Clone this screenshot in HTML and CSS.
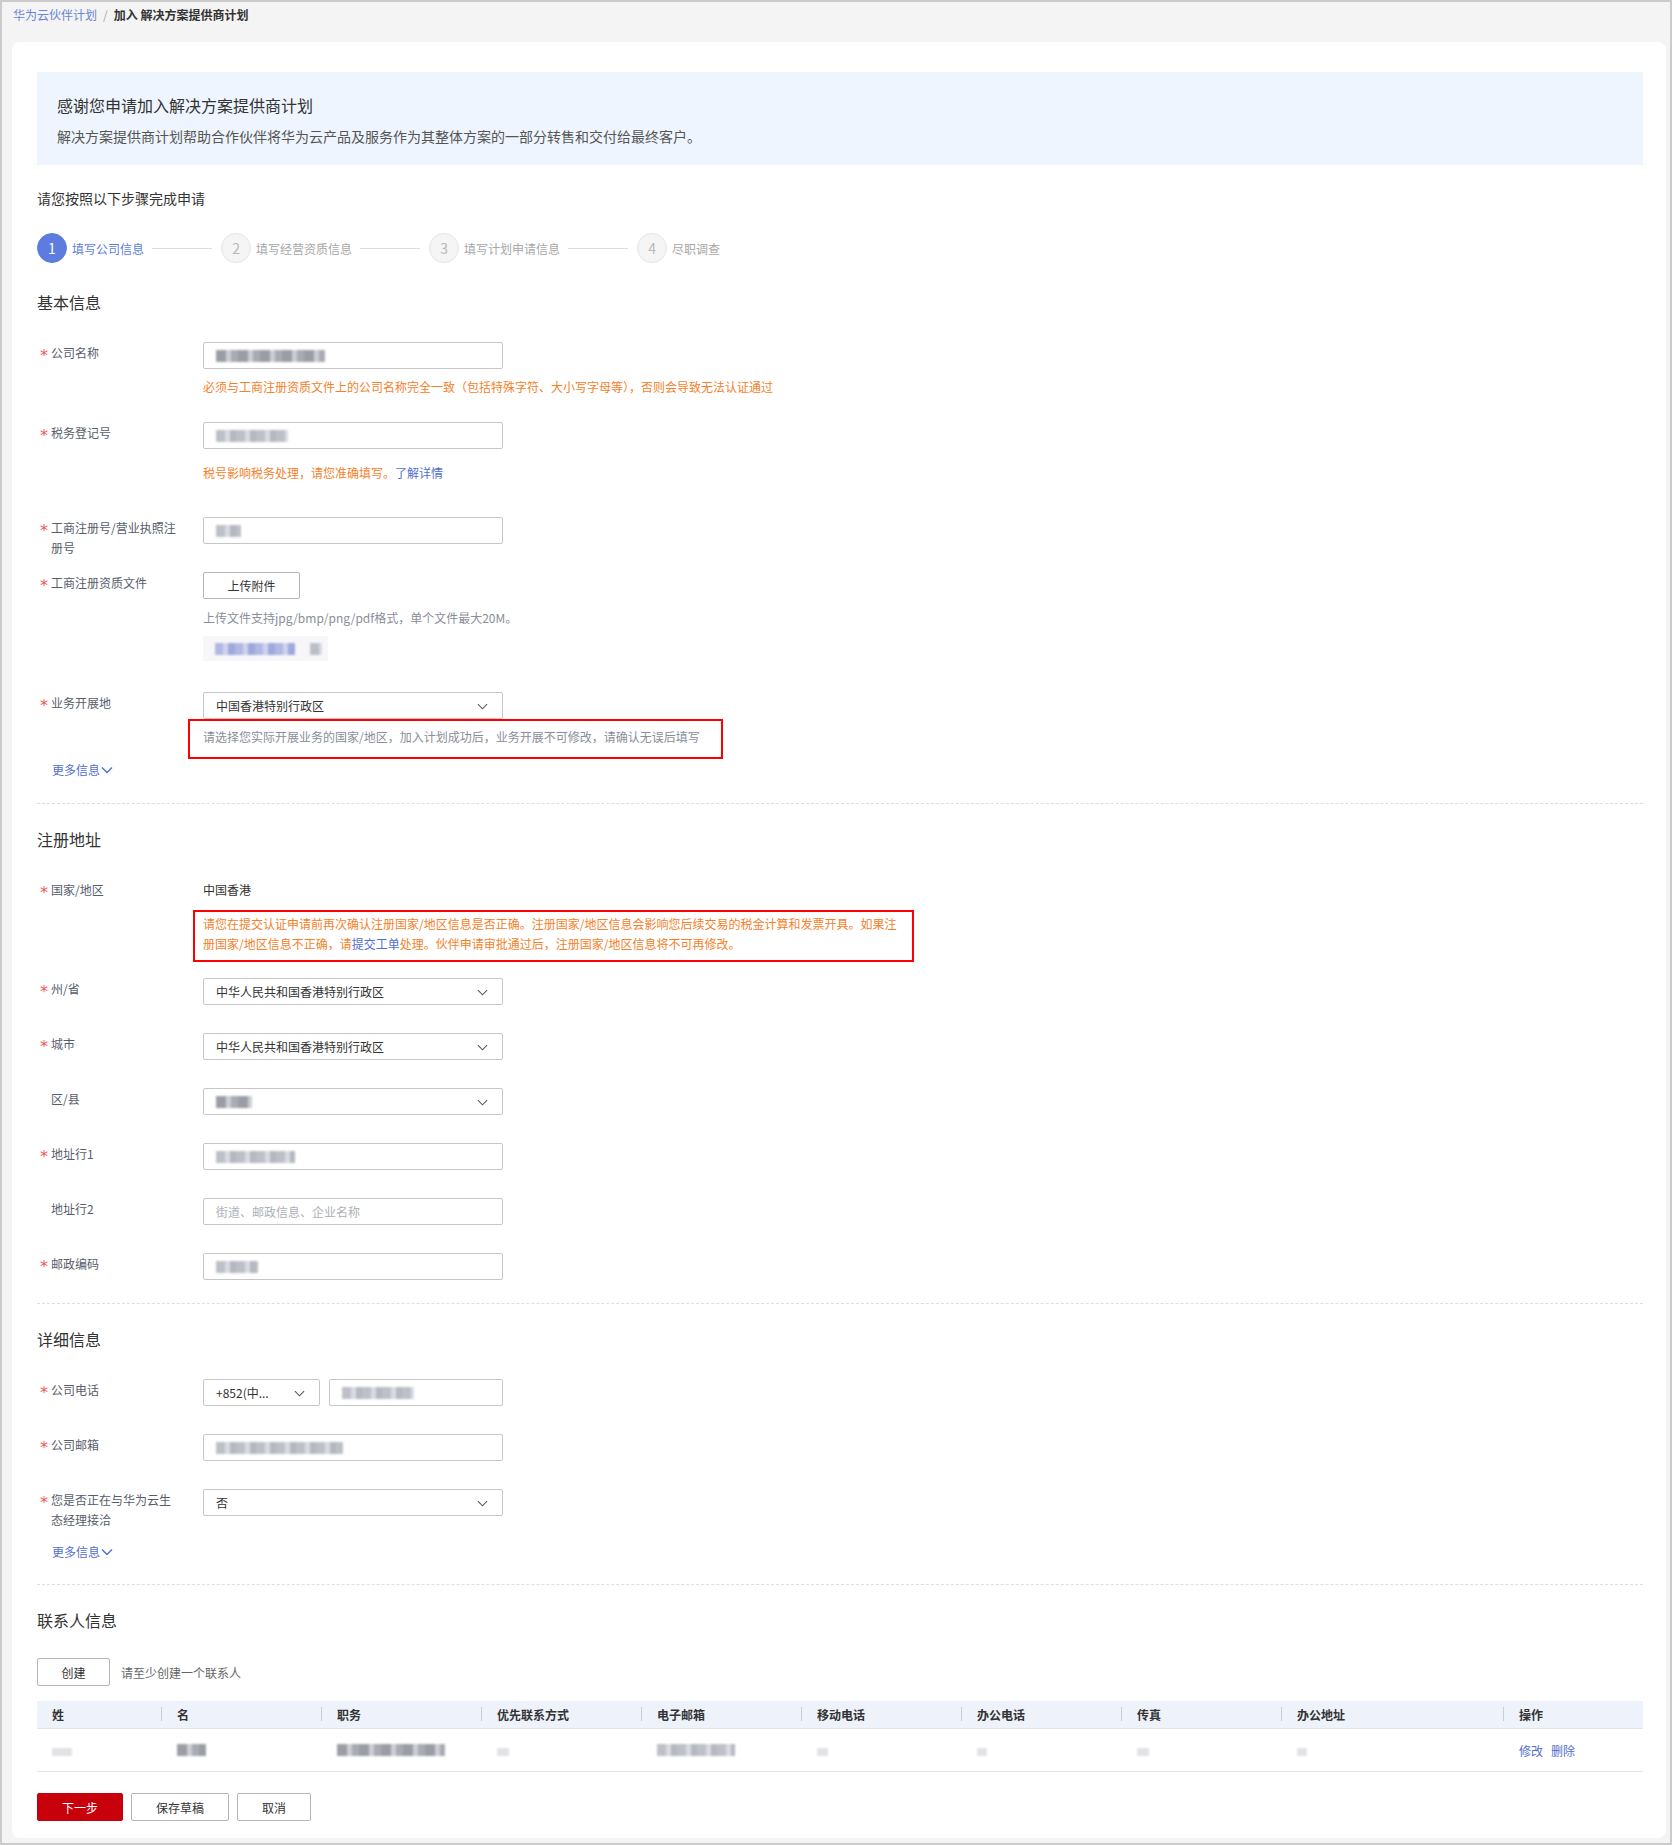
FILE: index.html
```html
<!DOCTYPE html>
<html lang="zh-CN">
<head>
<meta charset="UTF-8">
<title>加入 解决方案提供商计划</title>
<link rel="stylesheet" href="styles.css">
</head>
<body>
<div class="frame">
    <div class="crumb">
        <a class="crumb-link">华为云伙伴计划</a><span class="crumb-sep">/</span><span class="crumb-cur">加入 解决方案提供商计划</span>
    </div>

    <div class="card">
        <div class="notice">
            <div class="notice-title">感谢您申请加入解决方案提供商计划</div>
            <div class="notice-desc">解决方案提供商计划帮助合作伙伴将华为云产品及服务作为其整体方案的一部分转售和交付给最终客户。</div>
        </div>

        <div class="lead">请您按照以下步骤完成申请</div>

        <div class="steps">
            <span class="step-dot active">1</span><span class="step-text active">填写公司信息</span><span class="step-line"></span>
            <span class="step-dot">2</span><span class="step-text">填写经营资质信息</span><span class="step-line"></span>
            <span class="step-dot">3</span><span class="step-text">填写计划申请信息</span><span class="step-line"></span>
            <span class="step-dot">4</span><span class="step-text">尽职调查</span>
        </div>

        <!-- 基本信息 -->
        <h3 class="section-title first">基本信息</h3>

        <div class="item gap-26">
            <div class="label"><span class="star">*</span><span class="label-text">公司名称</span></div>
            <div class="control">
                <div class="input"><span class="blur dark w109"></span></div>
                <div class="hint warn">必须与工商注册资质文件上的公司名称完全一致（包括特殊字符、大小写字母等），否则会导致无法认证通过</div>
            </div>
        </div>

        <div class="item gap-35">
            <div class="label"><span class="star">*</span><span class="label-text">税务登记号</span></div>
            <div class="control">
                <div class="input"><span class="blur w72"></span></div>
                <div class="hint warn tax">税号影响税务处理，请您准确填写。<a class="link">了解详情</a></div>
            </div>
        </div>

        <div class="item gap-14">
            <div class="label"><span class="star">*</span><span class="label-text">工商注册号/营业执照注册号</span></div>
            <div class="control">
                <div class="input"><span class="blur w25"></span></div>
            </div>
        </div>

        <div class="item gap-31">
            <div class="label"><span class="star">*</span><span class="label-text">工商注册资质文件</span></div>
            <div class="control">
                <button class="btn upload">上传附件</button>
                <div class="hint muted upload-hint">上传文件支持jpg/bmp/png/pdf格式，单个文件最大20M。</div>
                <div class="file-chip"><span class="blur blue w80"></span><span class="blur w12"></span></div>
            </div>
        </div>

        <div class="item gap-0">
            <div class="label"><span class="star">*</span><span class="label-text">业务开展地</span></div>
            <div class="control">
                <div class="input select">中国香港特别行政区<svg class="chev" viewBox="0 0 12 7"><polyline points="1,1 6,6 11,1"/></svg></div>
                <div class="mark mark-area">请选择您实际开展业务的国家/地区，加入计划成功后，业务开展不可修改，请确认无误后填写</div>
            </div>
        </div>

        <a class="more more-1">更多信息<svg viewBox="0 0 12 8"><polyline points="1,1.5 6,6.5 11,1.5"/></svg></a>

        <div class="divider div-1"></div>

        <!-- 注册地址 -->
        <h3 class="section-title">注册地址</h3>

        <div class="item gap-16 country">
            <div class="label"><span class="star">*</span><span class="label-text">国家/地区</span></div>
            <div class="control">
                <div class="value">中国香港</div>
                <div class="mark mark-country">请您在提交认证申请前再次确认注册国家/地区信息是否正确。注册国家/地区信息会影响您后续交易的税金计算和发票开具。如果注册国家/地区信息不正确，请<a class="link">提交工单</a>处理。伙伴申请审批通过后，注册国家/地区信息将不可再修改。</div>
            </div>
        </div>

        <div class="item">
            <div class="label"><span class="star">*</span><span class="label-text">州/省</span></div>
            <div class="control">
                <div class="input select">中华人民共和国香港特别行政区<svg class="chev" viewBox="0 0 12 7"><polyline points="1,1 6,6 11,1"/></svg></div>
            </div>
        </div>

        <div class="item">
            <div class="label"><span class="star">*</span><span class="label-text">城市</span></div>
            <div class="control">
                <div class="input select">中华人民共和国香港特别行政区<svg class="chev" viewBox="0 0 12 7"><polyline points="1,1 6,6 11,1"/></svg></div>
            </div>
        </div>

        <div class="item">
            <div class="label"><span class="star hidden">*</span><span class="label-text">区/县</span></div>
            <div class="control">
                <div class="input select"><span class="blur dark w36"></span><svg class="chev" viewBox="0 0 12 7"><polyline points="1,1 6,6 11,1"/></svg></div>
            </div>
        </div>

        <div class="item">
            <div class="label"><span class="star">*</span><span class="label-text">地址行1</span></div>
            <div class="control">
                <div class="input"><span class="blur w79"></span></div>
            </div>
        </div>

        <div class="item">
            <div class="label"><span class="star hidden">*</span><span class="label-text">地址行2</span></div>
            <div class="control">
                <div class="input placeholder">街道、邮政信息、企业名称</div>
            </div>
        </div>

        <div class="item gap-0">
            <div class="label"><span class="star">*</span><span class="label-text">邮政编码</span></div>
            <div class="control">
                <div class="input"><span class="blur w42"></span></div>
            </div>
        </div>

        <div class="divider div-2"></div>

        <!-- 详细信息 -->
        <h3 class="section-title">详细信息</h3>

        <div class="item">
            <div class="label"><span class="star">*</span><span class="label-text">公司电话</span></div>
            <div class="control phone">
                <div class="input select code">+852(中...<svg class="chev" viewBox="0 0 12 7"><polyline points="1,1 6,6 11,1"/></svg></div>
                <div class="input number"><span class="blur w72"></span></div>
            </div>
        </div>

        <div class="item">
            <div class="label"><span class="star">*</span><span class="label-text">公司邮箱</span></div>
            <div class="control">
                <div class="input"><span class="blur w127"></span></div>
            </div>
        </div>

        <div class="item gap-0">
            <div class="label"><span class="star">*</span><span class="label-text">您是否正在与华为云生态经理接洽</span></div>
            <div class="control">
                <div class="input select">否<svg class="chev" viewBox="0 0 12 7"><polyline points="1,1 6,6 11,1"/></svg></div>
            </div>
        </div>

        <a class="more more-2">更多信息<svg viewBox="0 0 12 8"><polyline points="1,1.5 6,6.5 11,1.5"/></svg></a>

        <div class="divider div-3"></div>

        <!-- 联系人信息 -->
        <h3 class="section-title">联系人信息</h3>

        <div class="create-row">
            <button class="btn create">创建</button>
            <span class="create-tip">请至少创建一个联系人</span>
        </div>

        <table class="contacts">
            <colgroup>
                <col class="c-xs"><col class="c-md"><col class="c-md"><col class="c-md"><col class="c-md">
                <col class="c-md"><col class="c-md"><col class="c-md"><col class="c-lg"><col class="c-sm">
            </colgroup>
            <thead>
                <tr>
                    <th>姓</th><th>名</th><th>职务</th><th>优先联系方式</th><th>电子邮箱</th>
                    <th>移动电话</th><th>办公电话</th><th>传真</th><th>办公地址</th><th>操作</th>
                </tr>
            </thead>
            <tbody>
                <tr>
                    <td><span class="blur faint w20"></span></td>
                    <td><span class="blur dark w29"></span></td>
                    <td><span class="blur dark w108"></span></td>
                    <td><span class="blur faint w12"></span></td>
                    <td><span class="blur w78"></span></td>
                    <td><span class="blur faint w11"></span></td>
                    <td><span class="blur faint w10"></span></td>
                    <td><span class="blur faint w12"></span></td>
                    <td><span class="blur faint w10"></span></td>
                    <td><a class="link op">修改</a><a class="link op">删除</a></td>
                </tr>
            </tbody>
        </table>

        <div class="actions">
            <button class="btn primary">下一步</button>
            <button class="btn draft">保存草稿</button>
            <button class="btn cancel">取消</button>
        </div>
    </div>
</div>
</body>
</html>
```

FILE: styles.css
```css
  body {
      margin: 0;
      font-family: "Noto Sans CJK SC", "Microsoft YaHei", sans-serif;
      font-size: 12px;
      color: #333;
  }
  .frame {
      width: 1672px;
      height: 1845px;
      box-sizing: border-box;
      border: 2px solid #cbcbcb;
      background: #f4f4f4;
      overflow: hidden;
  }
  .crumb {
      height: 20px;
      padding: 3px 11px 17px;
      line-height: 20px;
      font-size: 12px;
  }
  .crumb-link {
      color: #6a84d8;
  }
  .crumb-sep {
      color: #a8a8a8;
      margin: 0 6px;
  }
  .crumb-cur {
      color: #333;
      font-weight: bold;
  }
  .card {
      margin: 0 4px 0 10px;
      height: 1796px;
      box-sizing: border-box;
      background: #fff;
      border-radius: 8px;
      padding: 30px 23px 0 25px;
  }

  /* notice */
  .notice {
      height: 93px;
      box-sizing: border-box;
      background: #eef5fe;
      padding: 22px 20px 0;
  }
  .notice-title {
      font-size: 16px;
      line-height: 22px;
      color: #333;
  }
  .notice-desc {
      margin-top: 10px;
      font-size: 14px;
      line-height: 20px;
      color: #555;
  }
  .lead {
      margin-top: 23px;
      font-size: 14px;
      line-height: 20px;
      color: #333;
  }

  /* steps */
  .steps {
      margin-top: 25px;
      height: 30px;
      display: flex;
      align-items: center;
  }
  .step-dot {
      width: 30px;
      height: 30px;
      box-sizing: border-box;
      border-radius: 50%;
      border: 1px solid #e4e4e4;
      background: #f5f5f5;
      color: #b8b8b8;
      font-size: 14px;
      display: flex;
      align-items: center;
      justify-content: center;
  }
  .step-dot.active {
      background: #5e7ce0;
      border-color: #5e7ce0;
      color: #fff;
  }
  .step-text {
      margin-left: 5px;
      font-size: 12px;
      color: #a8a8a8;
  }
  .step-text.active {
      color: #5e7ce0;
  }
  .step-line {
      width: 60px;
      height: 1px;
      background: #dcdcdc;
      margin: 0 9px 0 8px;
  }

  /* sections */
  .section-title {
      margin: 24px 0 0;
      font-size: 16px;
      line-height: 22px;
      font-weight: normal;
      color: #333;
  }
  .section-title.first {
      margin-top: 28px;
  }
  .section-title + .item {
      margin-top: 29px;
  }
  .divider {
      height: 0;
      border-top: 1px dashed #dedede;
  }
  .div-1 {
      margin-top: 24px;
  }
  .div-2,
  .div-3 {
      margin-top: 23px;
  }

  /* form items */
  .item {
      display: flex;
      align-items: flex-start;
      margin-bottom: 28px;
  }
  .item.gap-0 { margin-bottom: 0; }
  .item.gap-14 { margin-bottom: 14px; }
  .item.gap-16 { margin-bottom: 16px; }
  .item.gap-26 { margin-bottom: 26px; }
  .item.gap-31 { margin-bottom: 31px; }
  .item.gap-35 { margin-bottom: 35px; }
  .label {
      width: 166px;
      flex: none;
      box-sizing: border-box;
      padding: 1px 0 0 3px;
      display: flex;
      line-height: 20px;
      color: #575d6c;
  }
  .star {
      width: 11px;
      height: 20px;
      flex: none;
      padding-top: 5px;
      box-sizing: border-box;
      font-family: "DejaVu Sans", sans-serif;
      font-size: 16px;
      line-height: 16px;
      color: #f0595a;
  }
  .star.hidden {
      visibility: hidden;
  }
  .label-text {
      width: 128px;
  }
  .control {
      flex: 1;
  }
  .control.phone {
      display: flex;
      gap: 9px;
  }
  .input {
      width: 300px;
      height: 27px;
      box-sizing: border-box;
      border: 1px solid #c6c6c6;
      border-radius: 2px;
      padding: 0 12px;
      display: flex;
      align-items: center;
      color: #333;
      font-size: 12px;
      position: relative;
  }
  .input.code {
      width: 117px;
  }
  .input.number {
      width: 174px;
  }
  .input.placeholder {
      color: #adb0b8;
  }
  .select .chev {
      position: absolute;
      right: 14px;
      top: 10px;
      width: 11px;
      height: 7px;
      fill: none;
      stroke: #555;
      stroke-width: 1.2;
  }
  .hint {
      line-height: 18px;
      margin-top: 9px;
  }
  .hint.tax {
      margin-top: 15px;
  }
  .warn {
      color: #f5812a;
  }
  .muted {
      color: #8a8e99;
  }
  .link {
      color: #526ecc;
      cursor: pointer;
  }
  .value {
      line-height: 20px;
      padding-top: 1px;
      color: #333;
  }

  /* upload */
  .btn {
      font-family: inherit;
      font-size: 12px;
      height: 27px;
      box-sizing: border-box;
      border: 1px solid #b5b5b5;
      border-radius: 2px;
      background: #fff;
      color: #333;
      padding: 0;
      cursor: pointer;
  }
  .btn.upload {
      width: 97px;
      display: block;
  }
  .upload-hint {
      margin-top: 10px;
  }
  .file-chip {
      margin-top: 9px;
      width: 125px;
      height: 25px;
      box-sizing: border-box;
      background: #f7f7fa;
      padding: 0 6px 0 12px;
      display: flex;
      align-items: center;
      justify-content: space-between;
  }

  /* red annotation boxes */
  .mark {
      border: 2px solid #f00;
      box-sizing: border-box;
  }
  .mark-area {
      margin-left: -15px;
      width: 535px;
      height: 40px;
      padding: 7px 0 0 13px;
      line-height: 18px;
      color: #8a8e99;
  }
  .mark-country {
      margin: 10px 0 0 -10px;
      width: 721px;
      padding: 2px 9px 6px 8px;
      line-height: 20px;
      color: #f5812a;
  }
  .more {
      display: inline-flex;
      align-items: center;
      margin: 2px 0 0 15px;
      line-height: 18px;
      color: #526ecc;
      cursor: pointer;
  }
  .more svg {
      width: 12px;
      height: 8px;
      margin-left: 1px;
      fill: none;
      stroke: #526ecc;
      stroke-width: 1.4;
  }
  .more-2 {
      margin-top: 13px;
  }

  /* blurred values */
  .blur {
      display: inline-block;
      height: 12px;
      background: repeating-linear-gradient(90deg, #b3b6bf 0 9px, #d3d5db 9px 14px, #a9acb6 14px 20px);
      filter: blur(1.2px);
      opacity: 0.85;
  }
  .blur.dark {
      background: repeating-linear-gradient(90deg, #8a8d96 0 10px, #c4c6cc 10px 15px, #9a9da6 15px 22px);
  }
  .blur.blue {
      background: repeating-linear-gradient(90deg, #a5aee0 0 8px, #c9cdeb 8px 13px, #8f9bd8 13px 20px);
  }
  .blur.faint { background: #dcdde2; height: 8px; }
  .w10 { width: 10px; }
  .w11 { width: 11px; }
  .w12 { width: 12px; }
  .w20 { width: 20px; }
  .w25 { width: 25px; }
  .w29 { width: 29px; }
  .w36 { width: 36px; }
  .w42 { width: 42px; }
  .w72 { width: 72px; }
  .w78 { width: 78px; }
  .w79 { width: 79px; }
  .w80 { width: 80px; }
  .w108 { width: 108px; }
  .w109 { width: 109px; }
  .w127 { width: 127px; }

  /* contacts */
  .create-row {
      margin-top: 27px;
      display: flex;
      align-items: center;
  }
  .btn.create {
      width: 73px;
      height: 28px;
  }
  .create-tip {
      margin-left: 11px;
      color: #666;
  }
  .contacts {
      margin-top: 15px;
      width: 1606px;
      border-collapse: collapse;
      table-layout: fixed;
  }
  .c-xs { width: 124px; }
  .c-md { width: 160px; }
  .c-lg { width: 222px; }
  .c-sm { width: 140px; }
  .contacts th {
      height: 27px;
      padding: 0 0 0 16px;
      background: #eef2fa;
      border-bottom: 1px solid #dfe3ec;
      text-align: left;
      font-weight: 600;
      color: #333;
      position: relative;
  }
  .contacts th:first-child {
      padding-left: 15px;
  }
  .contacts th + th::before {
      content: "";
      position: absolute;
      left: 0;
      top: 6px;
      height: 14px;
      border-left: 1px solid #c8ccd4;
  }
  .contacts td {
      height: 42px;
      padding: 0 0 0 16px;
      border-bottom: 1px solid #e3e3e3;
      vertical-align: middle;
  }
  .contacts td:first-child {
      padding-left: 15px;
  }
  .op {
      margin-right: 8px;
  }

  /* actions */
  .actions {
      margin-top: 21px;
      display: flex;
      gap: 8px;
  }
  .actions .btn {
      height: 28px;
  }
  .btn.primary {
      width: 86px;
      background: #c7000b;
      border-color: #c7000b;
      color: #fff;
  }
  .btn.draft {
      width: 98px;
  }
  .btn.cancel {
      width: 74px;
  }
```
